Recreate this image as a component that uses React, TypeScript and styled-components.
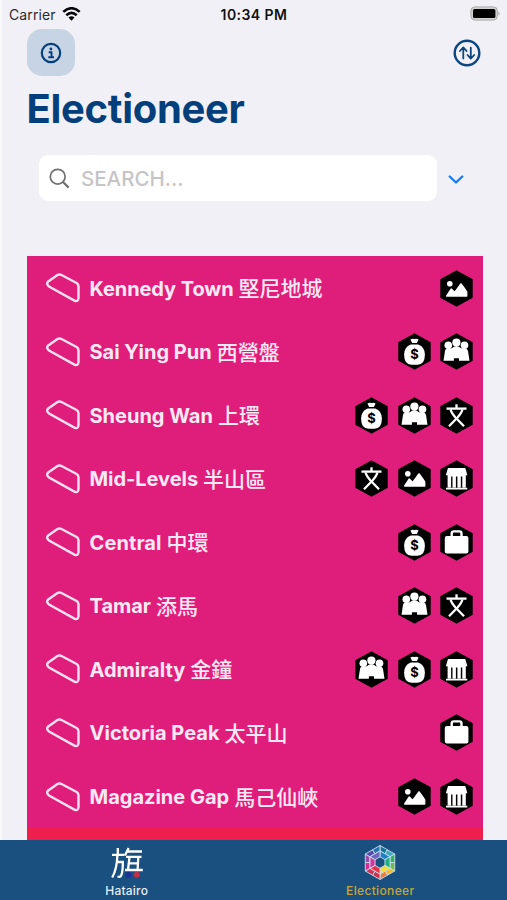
import React from "react";
import styled, { createGlobalStyle } from "styled-components";

const GlobalStyle = createGlobalStyle`
  * { box-sizing: border-box; }
  body { margin: 0; background: #f1f0f6; font-family: Inter, "Noto Sans CJK TC", sans-serif; }
  svg { display: block; flex: none; }
  button { border: 0; padding: 0; background: none; font: inherit; }
`;

const Screen = styled.div`
  width: 507px;
  height: 900px;
  overflow: hidden;
  display: flex;
  flex-direction: column;
  padding-left: 2px;
  background: linear-gradient(to right, #f8f8fb 2px, #f1f0f6 2px);
`;

const StatusBar = styled.div`
  height: 28px;
  flex: none;
  display: grid;
  grid-template-columns: 1fr auto 1fr;
  align-items: center;
  padding: 0 8px 0 7px;
  color: #111;
  font-size: 14px;
`;
const Carrier = styled.div`
  display: flex;
  align-items: center;
  gap: 6px;
  letter-spacing: 0.1px;
  color: #2b2b2e;
`;
const Clock = styled.div`
  font-weight: 600;
  letter-spacing: 0.45px;
`;
const BatterySlot = styled.div`
  display: flex;
  justify-content: flex-end;
  margin: -2px -2px 0 0;
`;

const Toolbar = styled.div`
  height: 47px;
  flex: none;
  display: flex;
  justify-content: space-between;
  align-items: center;
  padding: 0 26px 0 24.5px;
  margin-top: 1px;
`;
const InfoButton = styled.button`
  width: 48px;
  height: 47px;
  border-radius: 15px;
  background: #c7d4e3;
  display: grid;
  place-items: center;
`;

const Title = styled.h1`
  margin: 9px 0 0 24.5px;
  height: 48px;
  flex: none;
  line-height: 48px;
  font-size: 40px;
  font-weight: 700;
  letter-spacing: -0.3px;
  color: #043f7c;
`;

const SearchRow = styled.div`
  display: flex;
  align-items: center;
  gap: 11px;
  margin: 22px 0 0 37px;
  height: 46px;
  flex: none;
`;
const SearchField = styled.div`
  width: 398px;
  height: 46px;
  border-radius: 9px;
  background: #fff;
  display: flex;
  align-items: center;
  gap: 11px;
  padding-left: 10px;
  color: #c5c5c7;
  font-size: 20.5px;
  font-weight: 500;
`;

const List = styled.div`
  margin: 55.4px 24.5px 0 24.5px;
  flex: 1;
  min-height: 0;
  overflow: hidden;
  background: #df1e7b;
`;
const Row = styled.div`
  height: 63.55px;
  display: flex;
  align-items: center;
  padding: 0 9.5px 0 19px;
`;
const Name = styled.div<{ $spacing: number }>`
  margin: 1px 0 0 10px;
  display: flex;
  align-items: center;
  height: 30px;
  white-space: pre;
  font-size: 20px;
  font-weight: 700;
  letter-spacing: ${(p) => p.$spacing}px;
  color: #ffe9f6;
`;
const Chinese = styled.span`
  margin: -3px 0 0 5px;
  font-family: "Noto Sans CJK TC", sans-serif;
  font-size: 21px;
  font-weight: 500;
  line-height: 30px;
  letter-spacing: 0;
`;
const Badges = styled.div`
  margin-left: auto;
  display: flex;
  gap: 9.5px;
`;
const NextSection = styled.div`
  height: 20px;
  background: #ee1f4d;
`;

const TabBar = styled.nav`
  height: 60px;
  flex: none;
  margin-left: -2px;
  background: #19507f;
  display: grid;
  grid-template-columns: 1fr 1fr;
`;
const Tab = styled.div<{ $active?: boolean }>`
  display: flex;
  flex-direction: column;
  align-items: center;
  padding-top: 5px;
  font-size: 12px;
  line-height: 16px;
  font-weight: 500;
  letter-spacing: ${(p) => (p.$active ? 0.35 : 0.2)}px;
  color: ${(p) => (p.$active ? "#c9a63a" : "#e8eef5")};
`;
const TabLabel = styled.span`
  margin-top: 3px;
`;

type Kind = "scenery" | "money" | "people" | "culture" | "hall" | "business";

const glyphs: Record<Kind, React.ReactNode> = {
  scenery: (
    <g fill="#fff" stroke="#fff" strokeLinejoin="round">
      <circle cx="9.8" cy="13.8" r="2.8" stroke="none" />
      <path d="M6.8 26 L11.2 19.2 L14.8 22.5 L21 14 L24.3 18.5 L26.6 22 V26 Z" strokeWidth="1.6" />
    </g>
  ),
  money: (
    <>
      <path d="M12.4 6.4 Q14.5 5.4 16.5 6.1 Q18.5 5.4 20.6 6.4 L18.9 10 H14.1 Z" fill="#fff" />
      <path d="M12.8 11.4 H20.2 Q26.9 13.8 26.9 21.5 Q26.9 31.7 19.5 31.7 H13.5 Q6.1 31.7 6.1 21.5 Q6.1 13.8 12.8 11.4Z" fill="#fff" />
      <text x="16.5" y="26.3" fill="#000" fontFamily="Inter" fontSize="13" fontWeight="700" textAnchor="middle">$</text>
    </>
  ),
  people: (
    <g fill="#fff">
      <circle cx="8.3" cy="12.2" r="3.8" />
      <circle cx="24.5" cy="12.2" r="3.8" />
      <path d="M3.5 27.7 L5 18 Q5.6 15.2 8.3 15.2 H24.4 Q27.2 15.2 28 18 L29.5 27.7 H19 V25.3 H13.9 V27.7Z" />
      <circle cx="16.4" cy="9.6" r="4.1" />
      <path d="M11.5 17 Q12.2 13.3 16.4 13.3 Q20.6 13.3 21.3 17Z" />
    </g>
  ),
  culture: (
    <g fill="none" stroke="#fff" strokeWidth="2.3">
      <path d="M16.5 7.3 V11.5" />
      <path d="M6.5 11.6 H26.5" />
      <path d="M10.6 12.5 Q11.2 15.5 15.5 20.5 L24 29.3" />
      <path d="M22.4 12.5 Q21.8 15.5 17.5 20.5 L9 29.3" />
    </g>
  ),
  hall: (
    <g fill="#fff">
      <path d="M8 8 H25.3 L27.4 15.2 H5.8Z" />
      <path d="M7.6 15 H25.8 V16.4 H7.6Z M7.6 16 H11.1 V27.6 H7.6Z M12.5 16 H15.9 V27.6 H12.5Z M17.4 16 H20.8 V27.6 H17.4Z M22.3 16 H25.8 V27.6 H22.3Z M6 27.8 H27.3 V29.6 H6Z" />
    </g>
  ),
  business: (
    <>
      <rect x="4.8" y="12" width="23.6" height="17.4" rx="2" fill="#fff" />
      <path d="M11.7 12 V9.4 Q11.7 7.4 13.7 7.4 H19.5 Q21.5 7.4 21.5 9.4 V12" fill="none" stroke="#fff" strokeWidth="2.4" />
    </>
  ),
};

const Badge = ({ kind }: { kind: Kind }) => (
  <svg width="33" height="37" viewBox="0 0 33 37">
    <path d="M16.5 1 L32 9.5 V27.5 L16.5 36 L1 27.5 V9.5Z" stroke="#000" strokeWidth="1.4" strokeLinejoin="round" />
    {glyphs[kind]}
  </svg>
);

const Outline = () => (
  <svg width="34" height="30" viewBox="0 0 34 30" fill="none" stroke="#ffe1f2" strokeWidth="2.4">
    <path d="M2.2 8.4 L11.5 2.1 Q13.4 .9 15.5 2 L30.6 10 Q32.5 11.1 32.5 13.2 V25 Q32.3 29.3 28.4 27.6 L3 13.5 Q-.3 11 2.2 8.4Z" />
  </svg>
);

const districts: { name: string; zh: string; spacing: number; kinds: Kind[] }[] = [
  { name: "Kennedy Town", zh: "堅尼地城", spacing: -0.09, kinds: ["scenery"] },
  { name: "Sai Ying Pun", zh: "西營盤", spacing: 0, kinds: ["money", "people"] },
  { name: "Sheung Wan", zh: "上環", spacing: 0, kinds: ["money", "people", "culture"] },
  { name: "Mid-Levels", zh: "半山區", spacing: -0.05, kinds: ["culture", "scenery", "hall"] },
  { name: "Central", zh: "中環", spacing: 0.1, kinds: ["money", "business"] },
  { name: "Tamar", zh: "添馬", spacing: 0, kinds: ["people", "culture"] },
  { name: "Admiralty", zh: "金鐘", spacing: 0, kinds: ["people", "money", "hall"] },
  { name: "Victoria Peak", zh: "太平山", spacing: 0.03, kinds: ["business"] },
  { name: "Magazine Gap", zh: "馬己仙峽", spacing: 0, kinds: ["scenery", "hall"] },
];

const WifiIcon = () => (
  <svg width="19" height="15" viewBox="0 0 19 15" fill="none" stroke="#050505" strokeWidth="2.6">
    <path d="M1.3 4.9 Q9.5 -2.4 17.7 4.9" />
    <path d="M4.3 8.2 Q9.5 3.6 14.7 8.2" />
    <path d="M6.5 10.5 Q9.5 8.1 12.5 10.5 L9.5 13.7Z" fill="#050505" stroke="none" />
  </svg>
);

const BatteryIcon = () => (
  <svg width="31" height="15" viewBox="0 0 31 15">
    <rect x=".9" y=".9" width="26.4" height="13.2" rx="4" fill="#d2d2d3" stroke="#aaa" strokeWidth="1" />
    <rect x="3" y="3" width="22.4" height="9" rx="1.6" fill="#000" />
    <path d="M28.4 5.2 Q31 7.5 28.4 9.8Z" fill="#aaa" />
  </svg>
);

const InfoIcon = () => (
  <svg width="22" height="22" viewBox="0 0 22 22" fill="none" stroke="#043f7c">
    <circle cx="11" cy="11" r="9.2" strokeWidth="2.2" />
    <circle cx="10.9" cy="7" r="1.4" fill="#043f7c" stroke="none" />
    <path d="M8.7 10.2 H11.5 V15 M8.3 15.2 H14" strokeWidth="1.9" />
  </svg>
);

const SortIcon = () => (
  <svg width="28" height="28" viewBox="0 0 28 28" fill="none" stroke="#0b4681" strokeLinecap="round" strokeLinejoin="round">
    <circle cx="14" cy="14" r="12.3" strokeWidth="2.4" />
    <path d="M10.3 19.4 V8.6 M6.9 12 L10.3 8.4 L13.6 12 M17.8 8.6 V19.4 M14.5 16 L17.8 19.6 L21.2 16" strokeWidth="1.8" />
  </svg>
);

const wheelColors = ["#1f7fc4", "#20b07c", "#f2dc38", "#ea3347", "#d5389c", "#7164bd"];
const outerColors = ["#167599", "#43a6bd", "#30b45b", "#6dbd48", "#efbd37", "#e87d3c", "#ce3249", "#d63351", "#d92b91", "#9e4ba8", "#574aae", "#2775ad"];
const hex = (r: number, i: number): [number, number] => {
  const a = ((i * 60 - 90) * Math.PI) / 180;
  return [17 + r * Math.cos(a), 17.5 + r * Math.sin(a)];
};
const mid = (a: [number, number], b: [number, number]): [number, number] => [(a[0] + b[0]) / 2, (a[1] + b[1]) / 2];

const WheelIcon = () => (
  <svg width="34" height="35" viewBox="0 0 34 35" stroke="#c9dff0" strokeWidth="0.9" strokeLinejoin="round">
    {wheelColors.map((color, i) => {
      const o1 = hex(17, i), o2 = hex(17, i + 1);
      const m1 = hex(11.6, i), m2 = hex(11.6, i + 1);
      const n1 = hex(5.7, i), n2 = hex(5.7, i + 1);
      const o = mid(o1, o2), m = mid(m1, m2);
      return (
        <g key={color}>
          <polygon points={[o1, o, m, m1].join(" ")} fill={outerColors[i * 2]} />
          <polygon points={[o, o2, m2, m].join(" ")} fill={outerColors[i * 2 + 1]} />
          <polygon points={[m1, m2, n2, n1].join(" ")} fill={color} />
        </g>
      );
    })}
  </svg>
);

const FlagLogo = () => (
  <svg width="34" height="35" viewBox="0 0 34 35" fill="none" stroke="#fff" strokeWidth="2.3">
    <circle cx="18.6" cy="29.8" r="3" fill="#1b3296" stroke="none" />
    <circle cx="26.8" cy="29.8" r="3" fill="#c32d45" stroke="none" />
    <path d="M7.8 3 V9 M2 9.8 H14.5 M7.4 10 Q7 24 2.2 32.5 M7 17 H12.8 Q13 26 11.2 30.5 Q10.5 32.5 7.5 31.5" />
    <path d="M18.6 3 L15 10.5 M17.5 6.5 H32" />
    <path d="M16 11.8 H31.5 M19.5 12 L18 25 M28.3 12 L27.6 25 M18.5 18.4 H28.5 M15 25 H32.8" />
  </svg>
);

export default function App() {
  return (
    <>
      <GlobalStyle />
      <Screen>
        <StatusBar>
          <Carrier>Carrier <WifiIcon /></Carrier>
          <Clock>10:34 PM</Clock>
          <BatterySlot><BatteryIcon /></BatterySlot>
        </StatusBar>
        <Toolbar>
          <InfoButton aria-label="Info"><InfoIcon /></InfoButton>
          <SortIcon />
        </Toolbar>
        <Title>Electioneer</Title>
        <SearchRow>
          <SearchField>
            <svg width="21" height="21" viewBox="0 0 21 21" fill="none" stroke="#707073" strokeWidth="1.7">
              <circle cx="8.7" cy="8.7" r="7.4" />
              <path d="M14 14 L19.6 19.6" strokeWidth="2.2" />
            </svg>
            SEARCH...
          </SearchField>
          <svg width="16" height="12" viewBox="0 0 16 12" fill="none" stroke="#157cf3" strokeWidth="2.3" strokeLinecap="round" strokeLinejoin="round">
            <path d="M1.7 4.5 L8 10.5 L14.3 4.5" />
          </svg>
        </SearchRow>
        <List>
          {districts.map((d) => (
            <Row key={d.name}>
              <Outline />
              <Name $spacing={d.spacing}>{d.name}<Chinese>{d.zh}</Chinese></Name>
              <Badges>{d.kinds.map((k) => <Badge key={k} kind={k} />)}</Badges>
            </Row>
          ))}
          <NextSection />
        </List>
        <TabBar>
          <Tab><FlagLogo /><TabLabel>Hatairo</TabLabel></Tab>
          <Tab $active><WheelIcon /><TabLabel>Electioneer</TabLabel></Tab>
        </TabBar>
      </Screen>
    </>
  );
}
